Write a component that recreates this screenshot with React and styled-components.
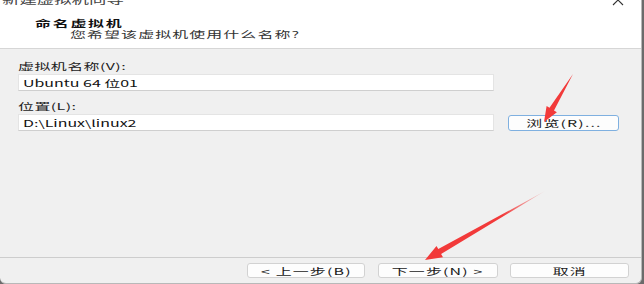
import React from "react";
import styled, { createGlobalStyle, css } from "styled-components";

const Global = createGlobalStyle`
  html, body {
    margin: 0;
    padding: 0;
    background: #6b6b6b;
    overflow: hidden;
  }
  * {
    box-sizing: border-box;
  }
`;

const stretch = css`
  display: inline-block;
  white-space: nowrap;
  transform: scale(1.45, 0.85);
  transform-origin: left center;
`;

const Window = styled.div`
  position: relative;
  width: 642px;
  height: 284px;
  display: flex;
  flex-direction: column;
  background: #f0f0f0;
  border-right: 1px solid #b8b8b8;
  border-bottom: 1px solid #b8b8b8;
  border-radius: 0 0 6px 6px;
  overflow: hidden;
  font-family: "Noto Sans CJK SC", "Noto Sans", sans-serif;
  font-size: 11px;
  color: #1e1e1e;
`;

const Header = styled.div`
  height: 49px;
  background: #fff;
  border-bottom: 1px solid #d6d6d6;
  display: flex;
  flex-direction: column;
`;

const TitleBar = styled.div`
  height: 14px;
  margin-top: -7px;
  padding: 0 17px 0 2px;
  display: flex;
  align-items: center;
  justify-content: space-between;
`;

const Title = styled.span`
  ${stretch}
  font-size: 12px;
  line-height: 14px;
  color: #444;
`;

const Heading = styled.div`
  margin: 11px 0 0 35px;
  line-height: 11px;
  font-weight: bold;
  color: #111;
  letter-spacing: 1.2px;
  span {
    ${stretch}
  }
`;

const Subtitle = styled.div`
  margin-left: 70px;
  line-height: 11px;
  color: #333;
  letter-spacing: 0.75px;
  span {
    ${stretch}
  }
`;

const Body = styled.div`
  flex: 1;
  padding: 9px 0 0 18px;
  display: flex;
  flex-direction: column;
`;

const Label = styled.div`
  height: 16px;
  line-height: 16px;
  color: #222;
  letter-spacing: 0.3px;
  margin-top: ${(p) => p.$gap || 0}px;
  span {
    ${stretch}
  }
`;

const Row = styled.div`
  display: flex;
  align-items: center;
  gap: 14px;
`;

const Field = styled.div`
  width: 476px;
  height: 17px;
  background: #fff;
  border: 1px solid #e4e4e4;
  border-bottom-color: #cfcfcf;
  padding-left: 4px;
  display: flex;
  align-items: center;
  color: #111;
  span {
    ${stretch}
  }
`;

const Button = styled.div`
  width: ${(p) => p.$w || 119}px;
  height: ${(p) => p.$h || 15}px;
  background: #fdfdfd;
  border: 1px solid ${(p) => (p.$focus ? "#7fb0e0" : "#d2d2d2")};
  border-radius: 3px;
  display: flex;
  align-items: center;
  justify-content: center;
  color: #1a1a1a;
  letter-spacing: 0.8px;
  span {
    ${stretch}
    transform-origin: center center;
  }
`;

const Footer = styled.div`
  height: 26px;
  border-top: 1px solid #cdcdcd;
  padding: 5px 12px 0 0;
  display: flex;
  justify-content: flex-end;
  gap: 12px;
  & > :first-child {
    margin-right: 1px;
  }
`;

const Overlay = styled.svg`
  position: absolute;
  inset: 0;
  pointer-events: none;
`;

const arrow = (x1, y1, x2, y2, head = 15, hw = 6, sw = 2.6) => {
  const len = Math.hypot(x2 - x1, y2 - y1);
  const dx = (x2 - x1) / len;
  const dy = (y2 - y1) / len;
  const nx = -dy;
  const ny = dx;
  const bx = x2 - dx * head;
  const by = y2 - dy * head;
  return [
    [x1, y1],
    [bx + nx * sw, by + ny * sw],
    [bx + nx * hw, by + ny * hw],
    [x2, y2],
    [bx - nx * hw, by - ny * hw],
    [bx - nx * sw, by - ny * sw],
  ]
    .map((p) => p.map((v) => v.toFixed(1)).join(","))
    .join(" ");
};

export default function App() {
  return (
    <>
      <Global />
      <Window>
        <Header>
          <TitleBar>
            <Title>新建虚拟机向导</Title>
            <svg width="12" height="12" viewBox="0 0 12 12">
              <path d="M1 1L11 11M11 1L1 11" stroke="#333" strokeWidth="1.1" />
            </svg>
          </TitleBar>
          <Heading>
            <span>命名虚拟机</span>
          </Heading>
          <Subtitle>
            <span>您希望该虚拟机使用什么名称?</span>
          </Subtitle>
        </Header>

        <Body>
          <Label>
            <span>虚拟机名称(V):</span>
          </Label>
          <Field>
            <span>Ubuntu 64 位01</span>
          </Field>
          <Label $gap={7}>
            <span>位置(L):</span>
          </Label>
          <Row>
            <Field>
              <span>D:\Linux\linux2</span>
            </Field>
            <Button $w={111} $h={16} $focus>
              <span>浏览(R)...</span>
            </Button>
          </Row>
        </Body>

        <Footer>
          <Button $w={118}>
            <span>&lt; 上一步(B)</span>
          </Button>
          <Button $w={120}>
            <span>下一步(N) &gt;</span>
          </Button>
          <Button $w={119}>
            <span>取消</span>
          </Button>
        </Footer>

        <Overlay width="644" height="284" viewBox="0 0 644 284">
          <defs>
            <linearGradient id="fade" x1="544" y1="192" x2="425" y2="260" gradientUnits="userSpaceOnUse">
              <stop offset="0" stopColor="#f24040" stopOpacity="0.15" />
              <stop offset="0.35" stopColor="#f23a3a" />
              <stop offset="1" stopColor="#f23a3a" />
            </linearGradient>
          </defs>
          <polygon points={arrow(573, 74, 544, 122)} fill="#f23a3a" />
          <polygon points={arrow(545, 191, 425, 260, 17, 6.5, 2.8)} fill="url(#fade)" />
        </Overlay>
      </Window>
    </>
  );
}
